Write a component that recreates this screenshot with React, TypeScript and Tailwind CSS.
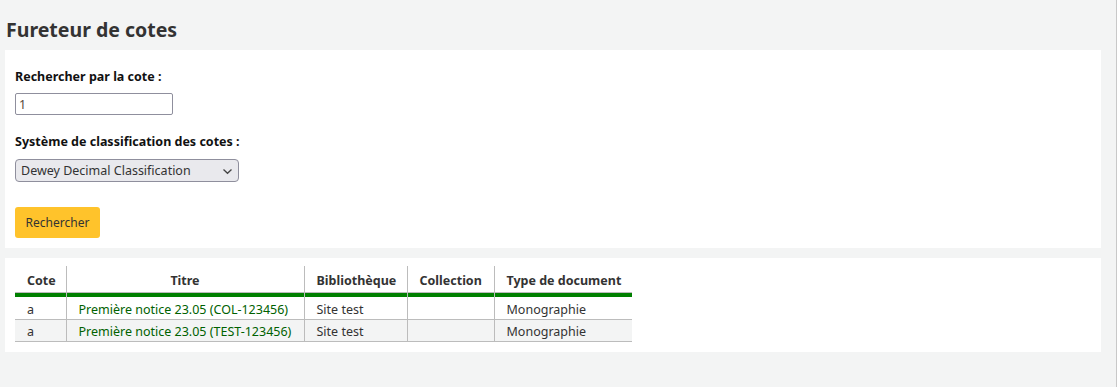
import React from "react";

export default function App() {
  const rows = [
    { cote: "a", titre: "Première notice 23.05 (COL-123456)", bib: "Site test", col: "", type: "Monographie", alt: false },
    { cote: "a", titre: "Première notice 23.05 (TEST-123456)", bib: "Site test", col: "", type: "Monographie", alt: true },
  ];
  return (
    <div className="flex w-[1117px] h-[387px] bg-[#f3f4f4] text-[#333]" style={{ fontFamily: '"Noto Sans", sans-serif' }}>
      <div className="flex-1 flex flex-col pl-[5px] pr-[15px]">
        <h1 className="text-[19.5px] font-bold leading-[24px] mt-[18px] mb-[8px] pl-[1px] text-[#333]">Fureteur de cotes</h1>
        <div className="bg-white px-[10px] pt-[17px] pb-[10px] flex flex-col">
          <label className="text-[12.5px] font-bold leading-[20px] text-[#111]">Rechercher par la cote :</label>
          <input
            defaultValue="1"
            className="mt-[6px] w-[158px] h-[22px] border border-[#8f8f9d] rounded-[2px] px-[3px] pt-[1px] text-[12.5px] text-[#5a4a3a] outline-none"
            style={{ fontFamily: '"Noto Sans", sans-serif' }}
          />
          <label className="mt-[17px] text-[12.5px] font-bold leading-[20px] text-[#111]">Système de classification des cotes :</label>
          <div className="mt-[7px] w-[224px] h-[23px] border border-[#8f8f9d] rounded-[4px] bg-[#e9e9ed] flex items-center justify-between pl-[5px] pr-[5px] pt-[2px]">
            <span className="text-[12.5px] text-[#333]">Dewey Decimal Classification</span>
            <svg width="11" height="7" viewBox="0 0 11 7" className="-mt-[1px]">
              <path d="M1.5 1.5 L5.5 5.3 L9.5 1.5" fill="none" stroke="#444" strokeWidth="1.3" />
            </svg>
          </div>
          <div className="mt-[25px]">
            <button className="w-[85px] h-[31px] bg-[#ffc32b] rounded-[3px] pt-[1px] text-[12px] text-[#333]" style={{ fontFamily: '"Noto Sans", sans-serif' }}>
              Rechercher
            </button>
          </div>
        </div>
        <div className="mt-[10px] bg-white px-[10px] pt-[8px] pb-[10px]">
          <table className="border-collapse text-[12.5px] leading-[17px] w-[617px]">
            <thead>
              <tr className="h-[26px]">
                <th className="w-[51px] text-left pl-[12px] pt-[3px] font-bold border-r border-[#bcbcbc] border-b border-b-[#bcbcbc]">Cote</th>
                <th className="w-[238px] text-center pt-[3px] font-bold border-r border-[#bcbcbc] border-b border-b-[#bcbcbc]">Titre</th>
                <th className="w-[103px] text-left pl-[12px] pt-[3px] font-bold border-r border-[#bcbcbc] border-b border-b-[#bcbcbc]">Bibliothèque</th>
                <th className="w-[87px] text-left pl-[12px] pt-[3px] font-bold border-r border-[#bcbcbc] border-b border-b-[#bcbcbc]">Collection</th>
                <th className="text-left pl-[12px] pt-[3px] font-bold border-b border-b-[#bcbcbc]">Type de document</th>
              </tr>
              <tr>
                <td className="p-0 h-[5px] bg-[#008000] border-r border-[#bcbcbc]"></td>
                <td className="p-0 h-[5px] bg-[#008000] border-r border-[#bcbcbc]"></td>
                <td className="p-0 h-[5px] bg-[#008000] border-r border-[#bcbcbc]"></td>
                <td className="p-0 h-[5px] bg-[#008000] border-r border-[#bcbcbc]"></td>
                <td className="p-0 h-[5px] bg-[#008000]"></td>
              </tr>
            </thead>
            <tbody>
              {rows.map((r, i) => (
                <tr key={i} className={`h-[22px] border-b border-[#bcbcbc] ${r.alt ? "bg-[#f3f4f4]" : "bg-white"}`}>
                  <td className="pl-[12px] pt-[3px] border-r border-[#bcbcbc]">{r.cote}</td>
                  <td className="pl-[12px] pt-[3px] border-r border-[#bcbcbc] text-[#006100]">{r.titre}</td>
                  <td className="pl-[12px] pt-[3px] border-r border-[#bcbcbc]">{r.bib}</td>
                  <td className="pl-[12px] pt-[3px] border-r border-[#bcbcbc]">{r.col}</td>
                  <td className="pl-[12px] pt-[3px]">{r.type}</td>
                </tr>
              ))}
            </tbody>
          </table>
        </div>
      </div>
      <div className="w-[1px] bg-[#c8c8c8]" />
    </div>
  );
}
